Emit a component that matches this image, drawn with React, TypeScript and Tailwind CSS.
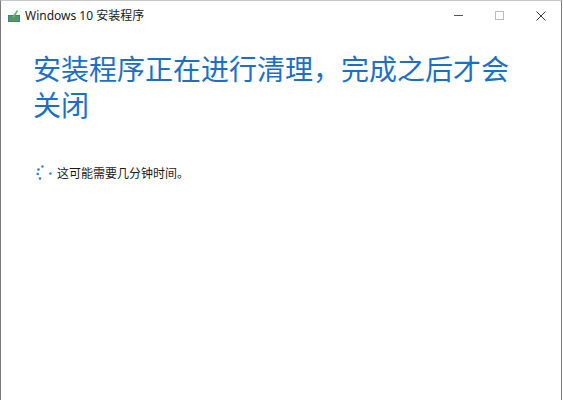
import React from "react";

const font = { fontFamily: '"Segoe UI", "Noto Sans", "Noto Sans CJK SC", sans-serif' };

function AppIcon() {
  return (
    <svg width="12" height="12" viewBox="0 0 12 12">
      <rect x="0" y="5" width="12" height="7" fill="#3a7fa8" />
      <rect x="1" y="6" width="10" height="5" fill="#4f9a6a" />
      <path d="M4 7 L9 0 L10 1 L6 8 Z" fill="#5cb85c" />
    </svg>
  );
}

function Spinner() {
  const dots = [
    [9.5, 1.5, 1.2],
    [5.5, 4.5, 1.3],
    [4.8, 9, 1.3],
    [7, 13.5, 1.3],
    [17.5, 8.5, 1.2],
  ];
  return (
    <svg width="22" height="18" viewBox="0 0 22 18">
      {dots.map(([cx, cy, r], i) => (
        <circle key={i} cx={cx} cy={cy} r={r} fill="#2a7fd0" />
      ))}
    </svg>
  );
}

export default function App() {
  return (
    <div className="w-[563px] h-[400px] bg-white overflow-hidden" style={font}>
      <div className="w-[562px] h-[400px] border-l border-r border-t border-[#7a7a7a] border-t-[#c8c8c8] flex flex-col">
        <div className="h-[29px] flex items-center">
          <div className="pl-[7px] pr-[5px] flex items-center">
            <AppIcon />
          </div>
          <span className="text-[12px] text-[#1a1a1a] leading-none">Windows 10 安装程序</span>
          <div className="ml-auto flex h-full">
            <div className="w-[41px] flex items-center justify-center">
              <div className="w-[9px] h-px bg-[#555]" />
            </div>
            <div className="w-[41px] flex items-center justify-center">
              <div className="w-[9px] h-[9px] border border-[#bbb]" />
            </div>
            <div className="w-[41px] flex items-center justify-center">
              <svg width="10" height="10" viewBox="0 0 10 10">
                <path d="M0.5 0.5 L9.5 9.5 M9.5 0.5 L0.5 9.5" stroke="#333" strokeWidth="1" />
              </svg>
            </div>
          </div>
        </div>
        <div className="pl-[32px] pt-[21px]">
          <h1 className="text-[28px] leading-[36px] text-[#1c6fc4] font-normal">
            安装程序正在进行清理，完成之后才会
            <br />
            关闭
          </h1>
          <div className="mt-[42px] flex items-center">
            <Spinner />
            <span className="ml-[2px] text-[12px] text-[#1a1a1a]">这可能需要几分钟时间。</span>
          </div>
        </div>
      </div>
    </div>
  );
}
